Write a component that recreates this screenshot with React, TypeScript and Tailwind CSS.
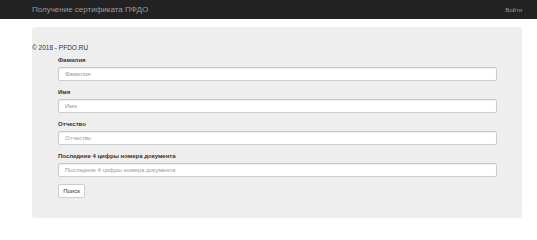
import React from "react";

const fields = [
  { label: "Фамилия", placeholder: "Фамилия" },
  { label: "Имя", placeholder: "Имя" },
  { label: "Отчество", placeholder: "Отчество" },
  {
    label: "Последние 4 цифры номера документа",
    placeholder: "Последние 4 цифры номера документа",
  },
];

export default function App() {
  return (
    <div
      className="min-h-[240px] w-full bg-white text-[#333]"
      style={{ fontFamily: '"Liberation Sans", Arial, sans-serif' }}
    >
      <div className="flex h-[19px] items-center justify-between bg-[#222] px-[32px] pr-[15px]">
        <span className="text-[8px] leading-none text-[#9d9d9d]">
          Получение сертификата ПФДО
        </span>
        <span className="text-[6px] leading-none text-[#9d9d9d]">Войти</span>
      </div>
      <div className="ml-[32px] mr-[15px] mt-[8px] rounded-[3px] bg-[#eee] pb-[20px] pt-[17px]">
        <div className="text-[6.5px] leading-[8px]">© 2018 - PFDO.RU</div>
        <form
          className="mt-[4px] flex flex-col px-[26px] pr-[25px] text-[6px] leading-none"
          onSubmit={(e) => e.preventDefault()}
        >
          {fields.map((f) => (
            <div key={f.label} className="mb-[7px]">
              <label className="mb-[3px] block text-[6px] font-bold leading-[8px]">
                {f.label}
              </label>
              <input
                className="block h-[14px] w-full rounded-[2px] border border-[#ccc] bg-white px-[6px] text-[6px] text-[#555] shadow-[inset_0_1px_1px_rgba(0,0,0,0.075)] outline-none placeholder:text-[#999]"
                placeholder={f.placeholder}
              />
            </div>
          ))}
          <div className="flex">
            <button
              type="submit"
              className="flex h-[14px] w-[27px] items-center justify-center rounded-[2px] border border-[#ccc] bg-white text-[6px] leading-none text-[#333]"
            >
              Поиск
            </button>
          </div>
        </form>
      </div>
    </div>
  );
}
